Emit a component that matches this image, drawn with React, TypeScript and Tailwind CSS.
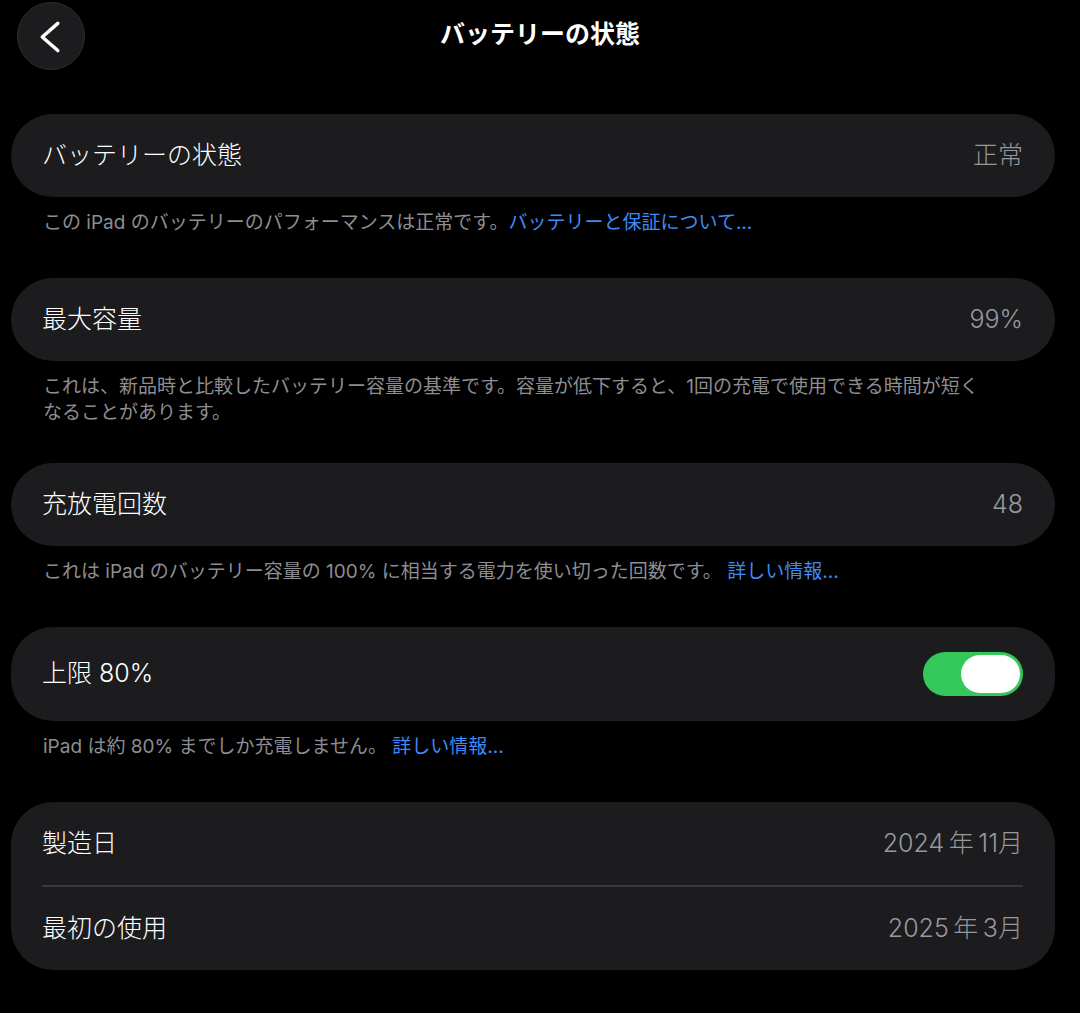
import React, { useState } from 'react';

const font = { fontFamily: 'Inter, "Noto Sans CJK JP", sans-serif' };

const Card: React.FC<{ children: React.ReactNode; className?: string }> = ({ children, className = '' }) => (
    <div className={`ml-[11px] w-[1044px] rounded-[42px] bg-[#1c1c1e] ${className}`}>{children}</div>
);

const Row: React.FC<{ label: string; value?: React.ReactNode; height?: string }> = ({ label, value, height = 'h-[83px]' }) => (
    <div className={`flex items-center justify-between pl-[31px] pr-[32px] ${height}`}>
        <span className="text-[25px] font-light text-white">{label}</span>
        {typeof value === 'string' ? <span className="text-[25px] font-light text-[#98989f]">{value}</span> : value}
    </div>
);

const Footer: React.FC<{ children: React.ReactNode; pb?: string }> = ({ children, pb = 'pb-[42px]' }) => (
    <p className={`ml-[43px] w-[980px] pt-[13px] text-[19px] leading-[26px] text-[#8d8d93] ${pb}`}>{children}</p>
);

const Link: React.FC<{ children: React.ReactNode }> = ({ children }) => (
    <span className="text-[#3f8bf6]">{children}</span>
);

const Toggle: React.FC = () => {
    const [on, setOn] = useState(true);
    return (
        <button
            onClick={() => setOn(!on)}
            className={`flex h-[44px] w-[100px] items-center rounded-full p-[3px] ${on ? 'justify-end bg-[#34c759]' : 'justify-start bg-[#39393d]'}`}
        >
            <span className="h-[38px] w-[59px] rounded-full bg-white" />
        </button>
    );
};

export default function App() {
    return (
        <div className="min-h-[1013px] w-[1080px] bg-black" style={font}>
            <div className="grid h-[70px] grid-cols-[1fr_auto_1fr] items-center">
                <button className="ml-[17px] mt-[1px] flex h-[68px] w-[68px] items-center justify-center rounded-full border border-[#2e2e30] bg-[#1c1c1e]">
                    <svg width="68" height="68" viewBox="0 0 68 68" fill="none">
                        <path d="M41 21 L25 35 L41 49" stroke="white" strokeWidth="3.6" strokeLinecap="round" strokeLinejoin="round" />
                    </svg>
                </button>
                <h1 className="text-[25px] font-bold text-white">バッテリーの状態</h1>
                <div />
            </div>

            <div className="mt-[44px]">
                <Card>
                    <Row label="バッテリーの状態" value="正常" />
                </Card>
                <Footer>
                    この iPad のバッテリーのパフォーマンスは正常です。<Link>バッテリーと保証について...</Link>
                </Footer>

                <Card>
                    <Row label="最大容量" value="99%" />
                </Card>
                <Footer pb="pb-[37px]">
                    これは、新品時と比較したバッテリー容量の基準です。容量が低下すると、1回の充電で使用できる時間が短く
                    <br />
                    なることがあります。
                </Footer>

                <Card>
                    <Row label="充放電回数" value="48" />
                </Card>
                <Footer>
                    これは iPad のバッテリー容量の 100% に相当する電力を使い切った回数です。 <Link>詳しい情報...</Link>
                </Footer>

                <Card>
                    <Row label="上限 80%" value={<Toggle />} height="h-[94px]" />
                </Card>
                <Footer>
                    iPad は約 80% までしか充電しません。 <Link>詳しい情報...</Link>
                </Footer>

                <Card>
                    <Row label="製造日" value={'2024\u2009年\u200911月'} />
                    <div className="ml-[31px] mr-[32px] h-[2px] bg-[#38383a]" />
                    <Row label="最初の使用" value={'2025\u2009年\u20093月'} />
                </Card>
            </div>
        </div>
    );
}
